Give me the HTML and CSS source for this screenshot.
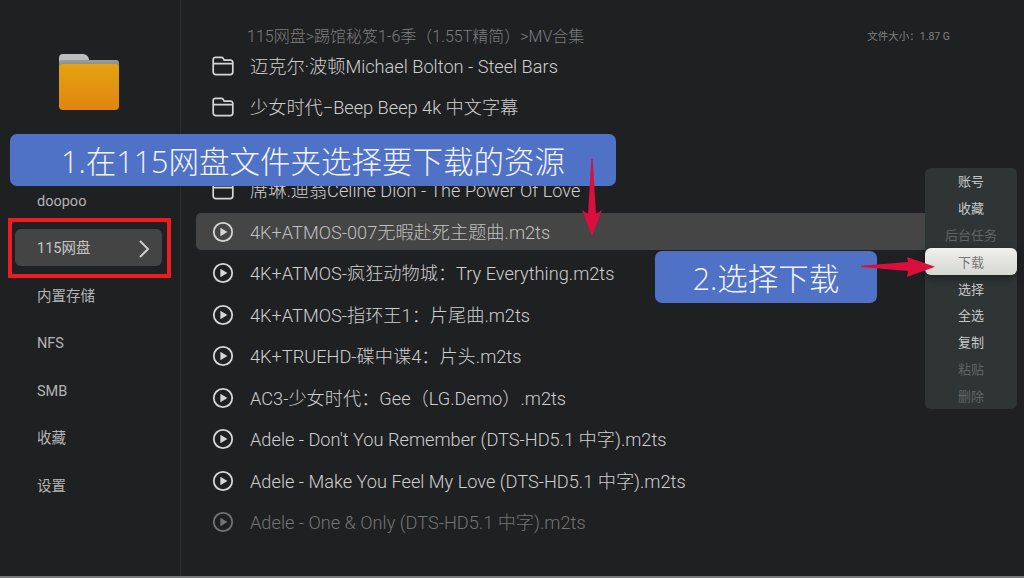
FILE: index.html

```html
<!DOCTYPE html>
<html lang="en">
<head>
    <meta charset="UTF-8">
    <meta name="viewport" content="width=device-width, initial-scale=1.0">
    <title>115网盘</title>
    <link rel="stylesheet" href="styles.css">
</head>
<body>
    <svg class="icon-defs" width="0" height="0">
        <symbol id="folder" viewBox="0 0 22 20">
            <path d="M1.2 16V3.5a2.2 2.2 0 0 1 2.2-2.2h6a2 2 0 0 1 1.6.8l1.2 2h6.4a2.2 2.2 0 0 1 2.2 2.2V16a2.6 2.6 0 0 1-2.6 2.6H3.8A2.6 2.6 0 0 1 1.2 16zM1.2 7.6h19.6" fill="none" stroke="currentColor" stroke-width="1.7"/>
        </symbol>
        <symbol id="play" viewBox="0 0 22 22">
            <circle cx="11" cy="11" r="9.2" fill="none" stroke="currentColor" stroke-width="1.8"/>
            <path d="M8.4 6.8l7 4.2-7 4.2z" fill="currentColor"/>
        </symbol>
    </svg>

    <div class="app">
        <aside class="sidebar">
            <div class="logo">
                <div class="logo-tab"></div>
                <div class="logo-back"></div>
                <div class="logo-front"></div>
            </div>
            <nav class="nav">
                <div class="nav-item">doopoo</div>
                <div class="nav-item active">
                    115网盘
                    <svg class="chevron" width="12" height="20" viewBox="0 0 12 20"><path d="M2 2l8 8-8 8" fill="none" stroke="currentColor" stroke-width="2"/></svg>
                    <div class="red-box"></div>
                </div>
                <div class="nav-item">内置存储</div>
                <div class="nav-item">NFS</div>
                <div class="nav-item">SMB</div>
                <div class="nav-item">收藏</div>
                <div class="nav-item">设置</div>
            </nav>
        </aside>

        <main class="main">
            <div class="topbar">
                <span class="crumbs">115网盘&gt;踢馆秘笈1-6季（1.55T精简）&gt;MV合集</span>
                <span class="filesize">文件大小：1.87 G</span>
            </div>
            <ul class="list">
                <li class="row"><svg class="row-icon"><use href="#folder"/></svg><span class="row-text">迈克尔·波顿Michael Bolton - Steel Bars</span></li>
                <li class="row"><svg class="row-icon"><use href="#folder"/></svg><span class="row-text">少女时代−Beep Beep 4k 中文字幕</span></li>
                <li class="row"><svg class="row-icon"><use href="#folder"/></svg></li>
                <li class="row"><svg class="row-icon"><use href="#folder"/></svg><span class="row-text">席琳.迪翁Celine Dion - The Power Of Love</span></li>
                <li class="row selected"><svg class="row-icon"><use href="#play"/></svg><span class="row-text">4K+ATMOS-007无暇赴死主题曲.m2ts</span></li>
                <li class="row"><svg class="row-icon"><use href="#play"/></svg><span class="row-text">4K+ATMOS-疯狂动物城：Try Everything.m2ts</span></li>
                <li class="row"><svg class="row-icon"><use href="#play"/></svg><span class="row-text">4K+ATMOS-指环王1：片尾曲.m2ts</span></li>
                <li class="row"><svg class="row-icon"><use href="#play"/></svg><span class="row-text">4K+TRUEHD-碟中谍4：片头.m2ts</span></li>
                <li class="row"><svg class="row-icon"><use href="#play"/></svg><span class="row-text">AC3-少女时代：Gee（LG.Demo）.m2ts</span></li>
                <li class="row"><svg class="row-icon"><use href="#play"/></svg><span class="row-text">Adele - Don't You Remember (DTS-HD5.1 中字).m2ts</span></li>
                <li class="row"><svg class="row-icon"><use href="#play"/></svg><span class="row-text">Adele - Make You Feel My Love (DTS-HD5.1 中字).m2ts</span></li>
                <li class="row faded"><svg class="row-icon"><use href="#play"/></svg><span class="row-text">Adele - One &amp; Only (DTS-HD5.1 中字).m2ts</span></li>
            </ul>
        </main>
    </div>

    <!-- context menu -->
    <div class="menu">
        <div class="menu-item">账号</div>
        <div class="menu-item">收藏</div>
        <div class="menu-item disabled">后台任务</div>
        <div class="menu-item current">下载</div>
        <div class="menu-item">选择</div>
        <div class="menu-item">全选</div>
        <div class="menu-item">复制</div>
        <div class="menu-item disabled">粘贴</div>
        <div class="menu-item disabled">删除</div>
    </div>

    <!-- annotations on top of the screenshot -->
    <div class="callout callout-one">1.在115网盘文件夹选择要下载的资源</div>
    <div class="callout callout-two">2.选择下载</div>
    <svg class="arrow arrow-down" width="20" height="77" viewBox="0 0 20 77"><path d="M9.300 0h1.400L14 55l6-4-10 26L0 51l6 4z" fill="#dc0d3f"/></svg>
    <svg class="arrow arrow-right" width="74" height="20" viewBox="0 0 74 20"><path d="M0 8.700L47 5 46 0l28 9.700L46 20l1-6L0 10z" fill="#dc0d3f"/></svg>
</body>
</html>
```

FILE: styles.css

```css
* {
    box-sizing: border-box;
}

body {
    margin: 0;
    width: 1024px;
    height: 578px;
    overflow: hidden;
    position: relative;
    background-color: #1f2022;
    font-family: Roboto, "Noto Sans CJK SC", sans-serif;
    color: #c8c8c8;
}

.icon-defs {
    position: absolute;
}

.app {
    display: flex;
    height: 578px;
    border-bottom: 2px solid #77787a;
}

/* left column */
.sidebar {
    width: 181px;
    flex-shrink: 0;
    border-right: 1px solid #2a2b2d;
    padding: 54px 18px 0 15px;
}

.logo {
    position: relative;
    width: 60px;
    height: 56px;
    margin-left: 44px;
}

.logo-tab {
    width: 30px;
    height: 20px;
    border-radius: 4px 6px 0 0;
    background-color: #bdbdbd;
}

.logo-back {
    position: absolute;
    top: 6px;
    left: 0;
    width: 60px;
    height: 16px;
    border-radius: 3px 3px 0 0;
    background: linear-gradient(#9c9c9c, #6b6b6b);
}

.logo-front {
    position: absolute;
    top: 10px;
    left: 0;
    width: 60px;
    height: 46px;
    border-radius: 4px;
    background: linear-gradient(#e5a212, #e0850f);
}

.nav {
    margin-top: 71px;
}

.nav-item {
    display: flex;
    align-items: center;
    justify-content: space-between;
    position: relative;
    height: 37px;
    margin-bottom: 10.500px;
    padding: 4px 12px 0 22px;
    border-radius: 6px;
    font-size: 14.500px;
    line-height: 20px;
    color: #b4b4b4;
}

.nav-item.active {
    background-color: #444444;
    color: #c4c4c4;
}

.chevron {
    color: #d0d0d0;
}

.red-box {
    position: absolute;
    top: -11px;
    left: -7px;
    width: 163px;
    height: 60px;
    border: 4px solid #f01a1f;
}

/* file list */
.main {
    flex: 1;
    padding: 23px 0 0 15px;
}

.topbar {
    display: flex;
    align-items: center;
    justify-content: space-between;
    height: 24px;
    padding: 0 74px 0 51px;
}

.crumbs {
    font-size: 16px;
    font-weight: 300;
    color: #7e7e7e;
}

.filesize {
    font-size: 10.500px;
    color: #808080;
}

.list {
    list-style: none;
    margin: 0;
    padding: 0;
}

.row {
    display: flex;
    align-items: center;
    gap: 16px;
    height: 37px;
    margin-bottom: 4.500px;
    padding-left: 16px;
    font-size: 18.200px;
    font-weight: 300;
    white-space: nowrap;
    color: #cfcfcf;
}

.row-text {
    padding-bottom: 2px;
}

.row.selected {
    margin-right: 50px;
    background-color: #454545;
    border-radius: 5px 0 0 5px;
    color: #c0c0c0;
}

.row.faded {
    color: #747474;
}

.row-icon {
    width: 22px;
    height: 22px;
    flex-shrink: 0;
    color: #d6d6d6;
}

.row.faded .row-icon {
    color: #747474;
}

/* right menu */
.menu {
    position: absolute;
    top: 168px;
    left: 925px;
    width: 92px;
    height: 241px;
    border-radius: 6px;
    background-color: #2f3535;
}

.menu-item {
    display: flex;
    align-items: center;
    justify-content: center;
    height: 26.800px;
    padding-bottom: 1px;
    font-size: 13px;
    color: #c6c8c8;
}

.menu-item.disabled {
    color: #5f6464;
}

.menu-item.current {
    border-radius: 6px;
    background: linear-gradient(#f0f0ee, #d5d7d1);
    box-shadow: 0 3px 8px rgba(0, 0, 0, 0.4);
    color: #777777;
}

/* annotations */
.callout {
    position: absolute;
    display: flex;
    align-items: center;
    justify-content: center;
    border-radius: 7px;
    background-color: #4f71c6;
    font-family: "Open Sans", "Noto Sans CJK SC", sans-serif;
    font-size: 30.500px;
    font-weight: 300;
    color: #f2f4fa;
}

.callout-one {
    top: 134px;
    left: 10px;
    width: 606px;
    height: 52px;
}

.callout-two {
    top: 251px;
    left: 655px;
    width: 222px;
    height: 52px;
}

.arrow {
    position: absolute;
}

.arrow-down {
    top: 159px;
    left: 582px;
}

.arrow-right {
    top: 257px;
    left: 861px;
}
```
